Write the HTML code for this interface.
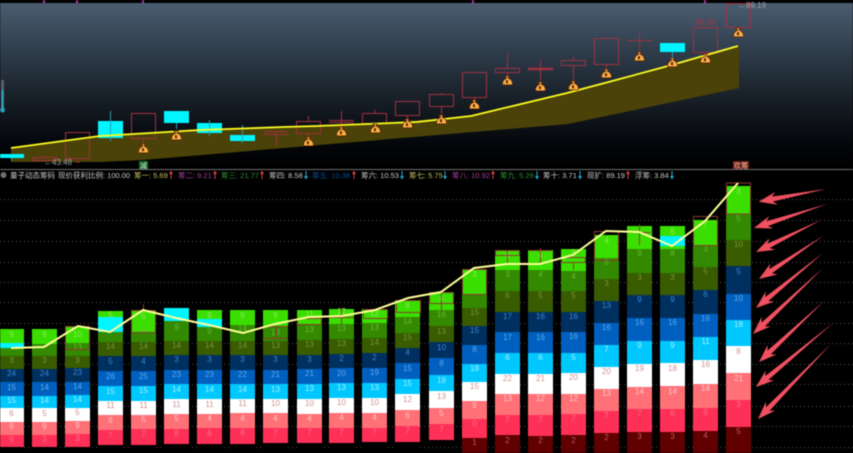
<!DOCTYPE html>
<html><head><meta charset="utf-8"><style>
html,body{margin:0;padding:0;background:#000;width:853px;height:453px;overflow:hidden}
svg{display:block;filter:blur(.4px);font-family:"Liberation Sans","Noto Sans CJK SC",sans-serif}
.bar rect{x:-12.5px;width:25px;height:32px}
.bar rect.h{height:27px}.bar rect.i{height:18px}.bar rect.k{height:6px}
.bar text{text-anchor:middle;font-size:8px}
.a{fill:#3adf00}.b{fill:#338a00}.c{fill:#3a5c00}.d{fill:#00305f}.e{fill:#0060bf}.f{fill:#00c8ff}.g{fill:#fff}.h{fill:#ff7077}.i{fill:#ff3058}.j{fill:#600000}.k{fill:#000}.l{fill:#00f5ff}
.a+text{fill:#90e860}.b+text{fill:#68b838}.c+text{fill:#70983a}.d+text{fill:#3a88d8}.e+text{fill:#60a8e8}.f+text{fill:#a8ecff}.g+text{fill:#d09090}.h+text{fill:#ffc8c8}.i+text{fill:#ff7088}.j+text{fill:#c85858}
.cd{fill:none;stroke:#a03040;stroke-width:1}
.bx{fill:none;stroke:#8a3a30;stroke-width:1}
.lg text{font-size:7.5px;fill:#c8c8c8}
</style></head><body>
<svg width="853" height="453" viewBox="0 0 853 453" xmlns="http://www.w3.org/2000/svg">
<defs>
<linearGradient id="bg" x1="0" y1="0" x2="0" y2="1"><stop offset="0" stop-color="#4a5d70"/><stop offset=".3" stop-color="#2e3c4a"/><stop offset=".6" stop-color="#161d25"/><stop offset=".85" stop-color="#04060a"/><stop offset="1" stop-color="#000"/></linearGradient>
<g id="bag"><path d="M-2.200,-5 h4.400 l-1,2.200 c2.800,1 4.300,3.300 4.300,5.700 q0,1 -1,1 h-8 q-1,0 -1,-1 c0,-2.400 1.500,-4.700 4.300,-5.700z" fill="#f8b048" stroke="#601c00" stroke-width=".7"/><rect x="-1" y="-.8" width="2" height="3" fill="#5a2800"/></g>
</defs>
<rect x="0" y="3" width="853" height="166" fill="url(#bg)"/>
<rect x="0" y="0" width="853" height="3" fill="#000"/>
<g fill="#b030a0"><rect x="43" y="0" width="2" height="3"/><rect x="76" y="0" width="2" height="3"/><rect x="142" y="0" width="2" height="3"/><rect x="472" y="0" width="2" height="3"/><rect x="704" y="0" width="2" height="3"/></g>
<rect x="1" y="80" width="3" height="30" fill="#55606a"/><rect x="1.500" y="90" width="2" height="20" fill="#2aa0c0"/><circle cx="2.500" cy="110" r="2.500" fill="#28a0c0"/>

<polygon points="11,148 100,136 200,130 284,127 370,124 471,116 517,105 567,93 601,84 668,66 739,46 739,88 568,124 284,148 143,160 100,162 11,162" fill="#4a4208"/>

<!-- candles -->
<g fill="#00f5ff"><rect x="0" y="154" width="24" height="4"/><rect x="98" y="121" width="25" height="17"/><rect x="164" y="111" width="25" height="12"/><rect x="197" y="123" width="25" height="10"/><rect x="230" y="135" width="25" height="6"/><rect x="660" y="43" width="25" height="9"/></g>
<g stroke="#28a0b0" stroke-width="1"><path d="M11.500 158V161M110.500 111V141M176.500 123V129M209.500 120V136M242.500 125V143M672.500 52V59"/></g>
<g class="cd">
<rect x="32.500" y="157.500" width="24" height="3"/><path d="M44.500 156V158"/>
<rect x="65.500" y="132.500" width="24" height="26"/>
<rect x="131.500" y="113.500" width="24" height="25"/><path d="M143.500 138V144"/>
<path d="M264 131.500H288M264 134.500H288M276.500 131V147"/>
<rect x="296.500" y="121.500" width="24" height="12"/><path d="M308.500 116V122M308.500 134V139"/>
<path d="M329 120.500H354M329 122.500H354M341.500 111V127"/>
<rect x="362.500" y="113.500" width="24" height="10"/><path d="M375 110V114M375 124V126"/>
<rect x="395.500" y="101.500" width="24" height="14"/><path d="M407.500 116V120"/>
<rect x="429.500" y="94.500" width="24" height="12"/><path d="M441.500 93V95M441.500 106V114"/>
<rect x="462.500" y="72.500" width="24" height="25"/><path d="M474.500 97V100"/>
<rect x="495.500" y="68.500" width="24" height="4"/><path d="M507.500 53V69M507.500 73V78"/>
<path d="M528 69H553" stroke-width="2.500"/><path d="M540.500 60V81"/>
<rect x="561.500" y="60.500" width="24" height="5"/><path d="M573.500 57V61M573.500 66V81"/>
<rect x="594.500" y="38.500" width="24" height="26"/><path d="M606.500 65V68"/>
<path d="M627 40.500H652M639.500 33V52"/>
<rect x="693.500" y="27.500" width="24" height="25"/>
<rect x="726.500" y="3.500" width="24" height="24"/>
<path d="M75 162H80"/>
</g>
<polyline points="11,148 100,136 200,130 284,127 317,126 417,122 471,116 517,105 567,93 601,84 668,66 738,46" fill="none" stroke="#ffff20" stroke-width="1.700"/>
<use href="#bag" x="143" y="149"/><use href="#bag" x="176" y="136"/><use href="#bag" x="308" y="142"/><use href="#bag" x="341" y="132"/><use href="#bag" x="375" y="129"/><use href="#bag" x="407" y="124"/><use href="#bag" x="441" y="120"/><use href="#bag" x="474" y="105"/><use href="#bag" x="507" y="81"/><use href="#bag" x="540" y="87"/><use href="#bag" x="573" y="86"/><use href="#bag" x="606" y="74"/><use href="#bag" x="639" y="57"/><use href="#bag" x="672" y="63"/><use href="#bag" x="705" y="59"/><use href="#bag" x="738" y="33"/>
<text x="44" y="165" font-size="8" fill="#9aa0a0">←43.48</text>
<text x="695" y="25" font-size="8" fill="#a03848">85.08</text>
<text x="738" y="8" font-size="8" fill="#9aa0a0">←89.19</text>
<rect x="139" y="161" width="9" height="8" fill="#1a6a30"/><text x="143.500" y="168" font-size="7" text-anchor="middle" fill="#c8e8c8">减</text>
<rect x="733" y="161" width="16" height="8" fill="#701818"/><text x="741" y="168" font-size="7.500" text-anchor="middle" fill="#e8c8a0">欢筹</text>
<rect x="0" y="169" width="853" height="1" fill="#707070"/>

<!-- legend -->
<g class="lg">
<circle cx="3.500" cy="175" r="3" fill="#707070"/>
<text x="10" y="178">量子动态筹码</text>
<text x="58" y="178">现价获利比例: 100.00</text>
<text x="134" y="178" style="fill:#c8c060">筹一: 5.69</text>
<text x="178" y="178" style="fill:#a040a0">筹二: 9.21</text>
<text x="221" y="178" style="fill:#309030">筹三: 21.77</text>
<text x="269" y="178">筹四: 8.58</text>
<text x="312" y="178" style="fill:#0050a0">筹五: 10.38</text>
<text x="361" y="178">筹六: 10.53</text>
<text x="409" y="178" style="fill:#c0c060">筹七: 5.75</text>
<text x="452" y="178" style="fill:#a040a0">筹八: 10.92</text>
<text x="500" y="178" style="fill:#309030">筹九: 5.26</text>
<text x="543" y="178">筹十: 3.71</text>
<text x="587" y="178">现扩: 89.19</text>
<text x="635" y="178">浮筹: 3.84</text>
</g>
<g fill="none" stroke="#e04040" stroke-width="1"><path d="M171 179V172M169.500 174L171 171.500L172.500 174M215 179V172M213.500 174L215 171.500L216.500 174M262 179V172M260.500 174L262 171.500L263.500 174M354 179V172M352.500 174L354 171.500L355.500 174M493 179V172M491.500 174L493 171.500L494.500 174M628 179V172M626.500 174L628 171.500L629.500 174"/></g>
<g fill="none" stroke="#20b0e0" stroke-width="1"><path d="M306 171V178M304.500 176L306 178.500L307.500 176M402 171V178M400.500 176L402 178.500L403.500 176M445 171V178M443.500 176L445 178.500L446.500 176M537 171V178M535.500 176L537 178.500L538.500 176M580 171V178M578.500 176L580 178.500L581.500 176M672 171V178M670.500 176L672 178.500L673.500 176"/></g>

<!-- grid -->
<g stroke="#505050" stroke-width="1" stroke-dasharray="1 3">
<path d="M0 199.500H853M0 220.500H853M0 241.500H853M0 262.500H853M0 282.500H853M0 302.500H853M0 323.500H853M0 343.500H853M0 364.500H853M0 384.500H853M0 406.500H853M0 426.500H853M0 447.500H853"/>
</g>

<!-- bars -->
<g class="bar" transform="translate(11.500)"><rect class="a" y="329"/><text y="337">9</text><rect class="l" y="343"/><rect class="b" y="348"/><rect class="c" y="356"/><text y="363">3</text><rect class="d" y="369"/><text y="376">24</text><rect class="e" y="382"/><text y="390">15</text><rect class="f" y="396"/><text y="403">15</text><rect class="g" y="408"/><text y="416">6</text><rect class="h" y="422"/><text y="429">9</text><rect class="i" y="435"/><text y="442">9</text><rect class="k" y="447"/></g>
<g class="bar" transform="translate(44.500)"><rect class="a" y="329"/><text y="337">9</text><rect class="b" y="344"/><rect class="c" y="356"/><text y="363">3</text><rect class="d" y="369"/><text y="376">24</text><rect class="e" y="382"/><text y="390">14</text><rect class="f" y="396"/><text y="403">14</text><rect class="g" y="408"/><text y="416">5</text><rect class="h" y="422"/><text y="429">9</text><rect class="i" y="435"/><text y="442">3</text><rect class="k" y="447"/></g>
<g class="bar" transform="translate(77.500)"><rect class="a" y="327"/><text y="337">10</text><rect class="b" y="343"/><text y="350">13</text><rect class="c" y="356"/><text y="363">3</text><rect class="d" y="368"/><text y="375">23</text><rect class="e" y="382"/><text y="389">14</text><rect class="f" y="395"/><text y="402">14</text><rect class="g" y="408"/><text y="415">5</text><rect class="h" y="421"/><text y="428">9</text><rect class="i" y="434"/><text y="441">3</text><rect class="k" y="447"/></g>
<g class="bar" transform="translate(110.500)"><rect class="a" y="311"/><text y="317">5</text><rect class="l" y="317"/><rect class="b" y="332"/><rect class="c" y="342"/><text y="349">14</text><rect class="d" y="356"/><text y="364">5</text><rect class="e" y="371"/><text y="379">26</text><rect class="f" y="386"/><text y="394">15</text><rect class="g" y="401"/><text y="408">11</text><rect class="h" y="415"/><text y="423">6</text><rect class="i" y="430"/><text y="438">7</text><rect class="k" y="445"/></g>
<g class="bar" transform="translate(143.500)"><rect class="a" y="311"/><text y="319">5</text><rect class="b" y="332"/><text y="333">10</text><rect class="c" y="342"/><text y="349">14</text><rect class="d" y="356"/><text y="364">4</text><rect class="e" y="371"/><text y="379">25</text><rect class="f" y="386"/><text y="393">15</text><rect class="g" y="401"/><text y="408">11</text><rect class="h" y="415"/><text y="422">5</text><rect class="i" y="429"/><text y="437">7</text><rect class="k" y="445"/></g>
<g class="bar" transform="translate(176.500)"><rect class="l" y="308"/><rect class="b" y="321"/><text y="330">9</text><rect class="c" y="341"/><text y="348">14</text><rect class="d" y="355"/><text y="362">3</text><rect class="e" y="370"/><text y="377">23</text><rect class="f" y="384"/><text y="392">14</text><rect class="g" y="399"/><text y="407">11</text><rect class="h" y="414"/><text y="421">5</text><rect class="i" y="429"/><text y="436">8</text><rect class="k" y="444"/></g>
<g class="bar" transform="translate(209.500)"><rect class="a" y="310"/><text y="318">9</text><rect class="l" y="319"/><rect class="b" y="327"/><text y="334">9</text><rect class="c" y="341"/><text y="348">14</text><rect class="d" y="355"/><text y="362">3</text><rect class="e" y="370"/><text y="377">23</text><rect class="f" y="384"/><text y="392">14</text><rect class="g" y="399"/><text y="407">11</text><rect class="h" y="414"/><text y="421">4</text><rect class="i" y="428"/><text y="436">6</text><rect class="k" y="444"/></g>
<g class="bar" transform="translate(242.500)"><rect class="a" y="310"/><text y="318">9</text><rect class="b" y="325"/><text y="331">14</text><rect class="c" y="341"/><text y="348">14</text><rect class="d" y="355"/><text y="362">3</text><rect class="e" y="370"/><text y="377">22</text><rect class="f" y="384"/><text y="392">14</text><rect class="g" y="399"/><text y="406">11</text><rect class="h" y="413"/><text y="421">4</text><rect class="i" y="428"/><text y="435">8</text><rect class="k" y="444"/></g>
<g class="bar" transform="translate(275.500)"><rect class="a" y="310"/><text y="318">9</text><rect class="b" y="327"/><text y="335">13</text><rect class="c" y="341"/><text y="348">13</text><rect class="d" y="355"/><text y="362">3</text><rect class="e" y="370"/><text y="377">21</text><rect class="f" y="384"/><text y="392">13</text><rect class="g" y="399"/><text y="406">10</text><rect class="h" y="413"/><text y="421">4</text><rect class="i" y="428"/><text y="436">7</text><rect class="k" y="443"/></g>
<g class="bar" transform="translate(309.500)"><rect class="a" y="310"/><text y="317">11</text><rect class="b" y="324"/><text y="332">13</text><rect class="c" y="340"/><text y="347">13</text><rect class="d" y="355"/><text y="362">3</text><rect class="e" y="369"/><text y="376">21</text><rect class="f" y="384"/><text y="391">13</text><rect class="g" y="399"/><text y="406">10</text><rect class="h" y="414"/><text y="421">4</text><rect class="i" y="428"/><text y="435">7</text><rect class="k" y="443"/></g>
<g class="bar" transform="translate(341.500)"><rect class="a" y="309"/><text y="314">12</text><rect class="b" y="324"/><text y="331">13</text><rect class="c" y="339"/><text y="346">13</text><rect class="d" y="354"/><text y="361">2</text><rect class="e" y="368"/><text y="376">20</text><rect class="f" y="383"/><text y="390">13</text><rect class="g" y="398"/><text y="405">10</text><rect class="h" y="413"/><text y="420">4</text><rect class="i" y="428"/><text y="435">7</text><rect class="k" y="443"/></g>
<g class="bar" transform="translate(374.500)"><rect class="a" y="309"/><text y="316">12</text><rect class="b" y="323"/><text y="330">13</text><rect class="c" y="338"/><text y="345">14</text><rect class="d" y="353"/><text y="360">2</text><rect class="e" y="368"/><text y="375">19</text><rect class="f" y="383"/><text y="390">13</text><rect class="g" y="398"/><text y="405">10</text><rect class="h" y="413"/><text y="420">4</text><rect class="i" y="428"/><text y="435">7</text><rect class="k" y="442"/></g>
<g class="bar" transform="translate(407.500)"><rect class="a" y="300"/><text y="308">8</text><rect class="b" y="317"/><text y="324">14</text><rect class="c" y="333"/><text y="340">15</text><rect class="d" y="348"/><text y="355">4</text><rect class="e" y="363"/><text y="371">15</text><rect class="f" y="379"/><text y="386">15</text><rect class="g" y="394"/><text y="402">12</text><rect class="h" y="410"/><text y="418">6</text><rect class="i" y="426"/><text y="433">7</text><rect class="k" y="442"/></g>
<g class="bar" transform="translate(441.500)"><rect class="a" y="292"/><text y="301">4</text><rect class="b" y="310"/><text y="317">16</text><rect class="c" y="326"/><text y="334">13</text><rect class="d" y="342"/><text y="350">10</text><rect class="e" y="358"/><text y="366">8</text><rect class="f" y="375"/><text y="383">19</text><rect class="g" y="391"/><text y="399">13</text><rect class="h" y="408"/><text y="416">5</text><rect class="i" y="424"/><text y="432">7</text><rect class="k" y="440"/></g>
<g class="bar" transform="translate(474.500)"><rect class="a" y="269"/><text y="277">3</text><rect class="b" y="295"/><text y="295">4</text><rect class="c" y="308"/><text y="315">15</text><rect class="d" y="326"/><text y="333">15</text><rect class="e" y="345"/><text y="352">8</text><rect class="f" y="364"/><text y="371">18</text><rect class="g" y="382"/><text y="389">15</text><rect class="h" y="401"/><text y="408">9</text><rect class="i" y="419" style="height:19px"/><text y="426">0</text><rect class="j" y="438" style="height:15px"/><text y="445">1</text></g>
<g class="bar" transform="translate(507.500)"><rect class="a" y="250"/><text y="258">4</text><rect class="b" y="270"/><text y="277">3</text><rect class="c" y="291"/><text y="298">6</text><rect class="d" y="312"/><text y="319">17</text><rect class="e" y="332"/><text y="340">17</text><rect class="f" y="353"/><text y="360">6</text><rect class="g" y="374"/><text y="381">22</text><rect class="h" y="394"/><text y="401">13</text><rect class="i" y="415" style="height:20px"/><text y="422">7</text><rect class="j" y="435" style="height:18px"/><text y="443">2</text></g>
<g class="bar" transform="translate(540.500)"><rect class="a" y="250"/><text y="258">4</text><rect class="b" y="270"/><text y="277">4</text><rect class="c" y="291"/><text y="298">5</text><rect class="d" y="312"/><text y="319">16</text><rect class="e" y="332"/><text y="340">16</text><rect class="f" y="353"/><text y="360">6</text><rect class="g" y="374"/><text y="381">21</text><rect class="h" y="394"/><text y="401">12</text><rect class="i" y="415" style="height:21px"/><text y="422">7</text><rect class="j" y="436" style="height:17px"/><text y="443">2</text></g>
<g class="bar" transform="translate(573.500)"><rect class="a" y="249"/><text y="255">9</text><rect class="b" y="271"/><text y="279">4</text><rect class="c" y="291"/><text y="298">5</text><rect class="d" y="312"/><text y="319">16</text><rect class="e" y="332"/><text y="339">16</text><rect class="f" y="353"/><text y="360">5</text><rect class="g" y="373"/><text y="380">20</text><rect class="h" y="394"/><text y="401">12</text><rect class="i" y="414" style="height:21px"/><text y="421">7</text><rect class="j" y="435" style="height:18px"/><text y="443">2</text></g>
<g class="bar" transform="translate(606.500)"><rect class="a" y="235"/><text y="243">4</text><rect class="b" y="258"/><text y="265">5</text><rect class="c" y="279"/><text y="286">3</text><rect class="d" y="301"/><text y="308">13</text><rect class="e" y="323"/><text y="330">16</text><rect class="f" y="345"/><text y="352">7</text><rect class="g" y="367"/><text y="374">20</text><rect class="h" y="389"/><text y="396">13</text><rect class="i" y="411" style="height:22px"/><text y="418">7</text><rect class="j" y="433" style="height:20px"/><text y="440">2</text></g>
<g class="bar" transform="translate(639.500)"><rect class="a" y="226"/><rect class="b" y="249"/><text y="256">9</text><rect class="c" y="273"/><text y="280">3</text><rect class="d" y="295"/><text y="302">9</text><rect class="e" y="318"/><text y="325">16</text><rect class="f" y="341"/><text y="348">9</text><rect class="g" y="364"/><text y="371">19</text><rect class="h" y="387"/><text y="394">14</text><rect class="i" y="409" style="height:23px"/><text y="416">7</text><rect class="j" y="432" style="height:21px"/><text y="439">3</text></g>
<g class="bar" transform="translate(672.500)"><rect class="a" y="226"/><text y="234">6</text><rect class="l" y="236"/><rect class="a" y="246"/><rect class="b" y="249"/><text y="256">8</text><rect class="c" y="273"/><text y="280">3</text><rect class="d" y="295"/><text y="302">9</text><rect class="e" y="318"/><text y="325">16</text><rect class="f" y="341"/><text y="348">9</text><rect class="g" y="363"/><text y="371">18</text><rect class="h" y="386"/><text y="394">14</text><rect class="i" y="409" style="height:23px"/><text y="416">6</text><rect class="j" y="432" style="height:21px"/><text y="439">3</text></g>
<g class="bar" transform="translate(705.500)"><rect class="a" y="220"/><text y="227">7</text><rect class="b" y="245"/><text y="251">3</text><rect class="c" y="267"/><text y="274">5</text><rect class="d" y="290"/><text y="297">6</text><rect class="e" y="314"/><text y="321">16</text><rect class="f" y="337"/><text y="344">11</text><rect class="g" y="360"/><text y="367">16</text><rect class="h" y="384"/><text y="391">14</text><rect class="i" y="408" style="height:23px"/><text y="415">9</text><rect class="j" y="431" style="height:22px"/><text y="438">4</text></g>
<g class="bar" transform="translate(738.500)"><rect class="a" y="186"/><text y="194">3</text><rect class="b" y="214"/><text y="221">5</text><rect class="c" y="240"/><text y="247">10</text><rect class="d" y="266"/><text y="274">5</text><rect class="e" y="294"/><text y="301">10</text><rect class="f" y="320"/><text y="327">18</text><rect class="g" y="346"/><text y="354">8</text><rect class="h" y="373"/><text y="381">21</text><rect class="i" y="400" style="height:27px"/><text y="407">3</text><rect class="j" y="427" style="height:26px"/><text y="434">5</text></g>

<!-- overlay boxes -->
<g class="bx">
<rect x="65.500" y="326.500" width="24" height="23"/>
<rect x="131.500" y="310.500" width="24" height="22"/><path d="M143.500 304V311"/>
<path d="M264 326.500H288M276.500 326V338M264 338.500H288"/>
<rect x="297.500" y="318.500" width="24" height="6"/>
<path d="M329 317.500H354M341.500 308V325"/>
<rect x="363.500" y="309.500" width="24" height="9"/>
<rect x="396.500" y="300.500" width="24" height="12"/>
<rect x="429.500" y="292.500" width="24" height="11"/><path d="M441.500 292V310"/>
<rect x="462.500" y="269.500" width="24" height="25"/>
<rect x="495.500" y="250.500" width="24" height="5"/><path d="M507.500 250V265"/>
<path d="M528.500 250.500H552M540.500 248V265"/>
<rect x="561.500" y="257.500" width="24" height="5"/><path d="M573.500 262V270"/>
<rect x="594.500" y="231.500" width="24" height="29"/>
<path d="M627 232.500H651M639.500 224V245"/>
<rect x="693.500" y="216.500" width="24" height="29"/>
<rect x="726.500" y="183" width="24" height="31"/>
</g>

<polyline points="11,348 44,347 78,326 110,332 143,310 176,318 209,325 243,333 275,324 309,317 342,316 375,310 408,298 441,292 474,268 507,264 540,264 573,255 606,231 639,232 672,246 705,221 738,183" fill="none" stroke="#ffff99" stroke-width="2"/>

<!-- arrows -->
<g fill="#f05060">
<polygon transform="translate(758.700 201.700) rotate(-10.700)" points="0,0 18,-6.500 14,-2.500 68.500,0 14,2.500 18,6.500"/>
<polygon transform="translate(754 228) rotate(-18.200)" points="0,0 18,-6.500 14,-2.500 76.800,0 14,2.500 18,6.500"/>
<polygon transform="translate(756 252) rotate(-26.200)" points="0,0 18,-6.500 14,-2.500 72.500,0 14,2.500 18,6.500"/>
<polygon transform="translate(759 279) rotate(-33.900)" points="0,0 18,-6.500 14,-2.500 77,0 14,2.500 18,6.500"/>
<polygon transform="translate(756 308) rotate(-39.400)" points="0,0 18,-6.500 14,-2.500 86.700,0 14,2.500 18,6.500"/>
<polygon transform="translate(753 334) rotate(-43.300)" points="0,0 18,-6.500 14,-2.500 96,0 14,2.500 18,6.500"/>
<polygon transform="translate(759 362) rotate(-43.200)" points="0,0 18,-6.500 14,-2.500 89,0 14,2.500 18,6.500"/>
<polygon transform="translate(756 387) rotate(-39.700)" points="0,0 18,-6.500 14,-2.500 100,0 14,2.500 18,6.500"/>
<polygon transform="translate(758 419) rotate(-45.800)" points="0,0 18,-6.500 14,-2.500 104.700,0 14,2.500 18,6.500"/>
</g>
</svg>
</body></html>
